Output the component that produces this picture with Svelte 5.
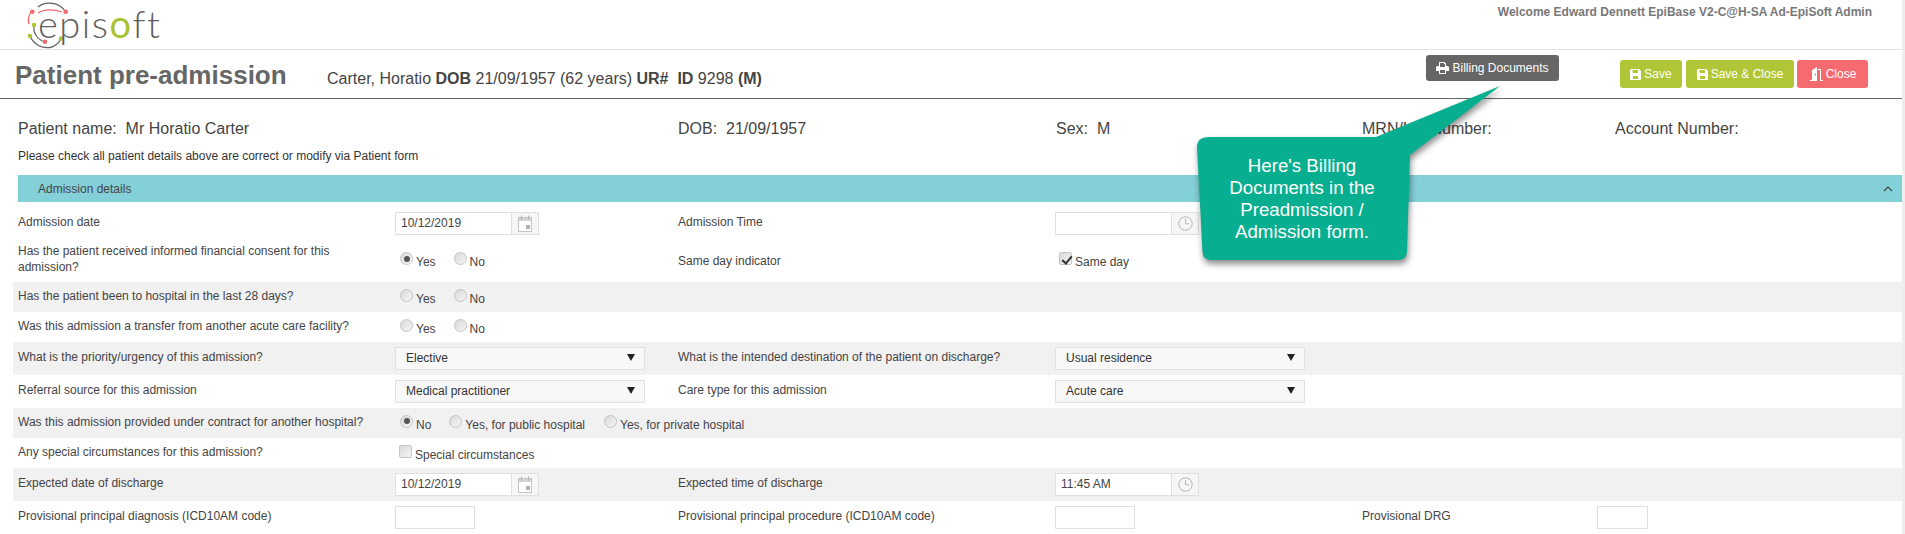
<script>
  const yesNo = (name, checked) => [
    { label: 'Yes', name, checked: checked === 'Yes' },
    { label: 'No', name, checked: checked === 'No' }
  ];
</script>

{#snippet calendar()}
  <span class="addon">
    <svg width="14" height="17" viewBox="0 0 14 17" fill="none">
      <rect x="0.5" y="2.5" width="13" height="14" fill="#fff" stroke="#c4c4c4"/>
      <rect x="1" y="3" width="12" height="3" fill="#d4d4d4"/>
      <path d="M3.5 0.5v4M10.5 0.5v4" stroke="#b5b5b5"/>
      <rect x="8" y="10" width="4" height="4" fill="#b0b0b0"/>
    </svg>
  </span>
{/snippet}

{#snippet clock()}
  <span class="addon">
    <svg width="15" height="15" viewBox="0 0 15 15" fill="none" stroke="#b5b5b5">
      <circle cx="7.5" cy="7.5" r="6.7"/>
      <path d="M7.5 3v4.8h3.6"/>
    </svg>
  </span>
{/snippet}

{#snippet radios(items)}
  <div class="choices">
    {#each items as item}
      <label class="choice">
        <input type="radio" name={item.name} checked={item.checked} />
        <span>{item.label}</span>
      </label>
    {/each}
  </div>
{/snippet}

{#snippet dropdown(value)}
  <div class="select">
    <select><option>{value}</option></select>
    <svg class="arrow" width="8" height="7" viewBox="0 0 8 7"><path d="M0 0h8L4 7z" fill="#222"/></svg>
  </div>
{/snippet}

<div class="page">
  <header class="top">
    <div class="logo">
      <svg class="marks" width="90" height="50" viewBox="0 0 90 50" fill="none">
        <path d="M38 7C44 2 54 2 60 6C62 7.500 64 9 65 11" stroke="#666" stroke-width="1.400"/>
        <path d="M29 24C27.500 19 29 14 32 11.500" stroke="#f4696d" stroke-width="1.400"/>
        <path d="M38 13C44 9 54 9 62 12" stroke="#f4696d" stroke-width="1.200"/>
        <path d="M30 36C34 45 42 48.500 50 47.500C54 47 58 44 61 39" stroke="#666" stroke-width="1.400"/>
        <path d="M34 27C33 33 38 40 45 42" stroke="#666" stroke-width="1.200"/>
        <circle cx="32.300" cy="11.700" r="2.300" fill="#f4696d"/>
        <circle cx="65.700" cy="11.700" r="2.300" fill="#f4696d"/>
        <circle cx="34" cy="25" r="2.300" fill="#b0c636"/>
        <circle cx="30" cy="36" r="2.300" fill="#b0c636"/>
        <circle cx="45" cy="41.700" r="2.300" fill="#f4696d"/>
        <circle cx="61" cy="38.500" r="2.300" fill="#b0c636"/>
      </svg>
      <span class="wordmark">epis<span class="green">o</span>ft</span>
    </div>
    <div class="welcome">Welcome Edward Dennett EpiBase V2-C@H-SA Ad-EpiSoft Admin</div>
  </header>

  <div class="titlebar">
    <h1>Patient pre-admission</h1>
    <div class="subject">Carter, Horatio <b>DOB</b> 21/09/1957 (62 years) <b>UR#</b>&nbsp; <b>ID</b> 9298 <b>(M)</b></div>
    <button class="btn billing">
      <svg width="13" height="12" viewBox="0 0 13 12"><path fill="#fff" fill-rule="evenodd" d="M3 0h5.500L10 1.500V4h1.500A1.500 1.500 0 0 1 13 5.500V9h-3v3H3V9H0V5.500A1.500 1.500 0 0 1 1.500 4H3zM4 1v4h5V2H8V1zM4 8v3h5V8z"/></svg>
      Billing Documents
    </button>
    <div class="actions">
      <button class="btn save">
        <svg width="11" height="11" viewBox="0 0 11 11"><path fill="#fff" fill-rule="evenodd" d="M1 0h8l2 2v8a1 1 0 0 1-1 1H1a1 1 0 0 1-1-1V1a1 1 0 0 1 1-1zM2.500 1v3h5.500V1zM3 7v3h5V7z"/></svg>
        Save
      </button>
      <button class="btn save">
        <svg width="11" height="11" viewBox="0 0 11 11"><path fill="#fff" fill-rule="evenodd" d="M1 0h8l2 2v8a1 1 0 0 1-1 1H1a1 1 0 0 1-1-1V1a1 1 0 0 1 1-1zM2.500 1v3h5.500V1zM3 7v3h5V7z"/></svg>
        Save &amp; Close
      </button>
      <button class="btn close">
        <svg width="14" height="14" viewBox="0 0 14 14"><path fill="#fff" fill-rule="evenodd" d="M3 13V3l5-3v14H1v-1zM6 6.500v2h1v-2zM9 2h3v11h2v1h-3V3H9z"/></svg>
        Close
      </button>
    </div>
  </div>

  <div class="patient">
    <span>Patient name:&nbsp; Mr Horatio Carter</span>
    <span>DOB:&nbsp; 21/09/1957</span>
    <span>Sex:&nbsp; M</span>
    <span>MRN/UR Number:</span>
    <span>Account Number:</span>
  </div>
  <p class="note">Please check all patient details above are correct or modify via Patient form</p>

  <div class="band">
    <span>Admission details</span>
    <svg width="10" height="6" viewBox="0 0 10 6" fill="none"><path d="M1 5l4-4 4 4" stroke="#444" stroke-width="1.200"/></svg>
  </div>

  <div class="form">
    <div class="row first">
      <div class="lab">Admission date</div>
      <div class="ctl"><div class="group"><input value="10/12/2019" />{@render calendar()}</div></div>
      <div class="lab2">Admission Time</div>
      <div class="ctl"><div class="group"><input value="" />{@render clock()}</div></div>
    </div>
    <div class="row second">
      <div class="lab">Has the patient received informed financial consent for this admission?</div>
      <div class="ctl">{@render radios(yesNo('consent', 'Yes'))}</div>
      <div class="lab2 low">Same day indicator</div>
      <div class="ctl">
        <label class="choice check"><input type="checkbox" checked /><span>Same day</span></label>
      </div>
    </div>
    <div class="row h30 grey">
      <div class="lab">Has the patient been to hospital in the last 28 days?</div>
      <div class="ctl">{@render radios(yesNo('recent', ''))}</div>
    </div>
    <div class="row h30">
      <div class="lab">Was this admission a transfer from another acute care facility?</div>
      <div class="ctl">{@render radios(yesNo('transfer', ''))}</div>
    </div>
    <div class="row h33 grey">
      <div class="lab">What is the priority/urgency of this admission?</div>
      <div class="ctl">{@render dropdown('Elective')}</div>
      <div class="lab2">What is the intended destination of the patient on discharge?</div>
      <div class="ctl">{@render dropdown('Usual residence')}</div>
    </div>
    <div class="row h33">
      <div class="lab">Referral source for this admission</div>
      <div class="ctl">{@render dropdown('Medical practitioner')}</div>
      <div class="lab2">Care type for this admission</div>
      <div class="ctl">{@render dropdown('Acute care')}</div>
    </div>
    <div class="row h30 grey">
      <div class="lab">Was this admission provided under contract for another hospital?</div>
      <div class="ctl wide">
        <div class="choices tight">
          <label class="choice"><input type="radio" name="contract" checked /><span>No</span></label>
          <label class="choice"><input type="radio" name="contract" /><span>Yes, for public hospital</span></label>
          <label class="choice"><input type="radio" name="contract" /><span>Yes, for private hospital</span></label>
        </div>
      </div>
    </div>
    <div class="row h30">
      <div class="lab">Any special circumstances for this admission?</div>
      <div class="ctl wide">
        <label class="choice check"><input type="checkbox" /><span>Special circumstances</span></label>
      </div>
    </div>
    <div class="row h33 grey">
      <div class="lab">Expected date of discharge</div>
      <div class="ctl"><div class="group"><input value="10/12/2019" />{@render calendar()}</div></div>
      <div class="lab2">Expected time of discharge</div>
      <div class="ctl"><div class="group"><input value="11:45 AM" />{@render clock()}</div></div>
    </div>
    <div class="row h33">
      <div class="lab">Provisional principal diagnosis (ICD10AM code)</div>
      <div class="ctl"><input class="plain" value="" /></div>
      <div class="lab2">Provisional principal procedure (ICD10AM code)</div>
      <div class="ctl"><input class="plain" value="" /></div>
      <div class="lab3">Provisional DRG</div>
      <div class="ctl"><input class="plain drg" value="" /></div>
    </div>
  </div>

  <div class="callout">
    <svg class="bubble" width="330" height="190" viewBox="0 0 330 190">
      <path d="M12 51H179L303 0L213 69L210 166Q209.500 174 201 174H14Q6 174 5.500 166L0 61Q0 51 12 51Z" fill="#07ae8f"/>
    </svg>
    <div class="tip">Here's Billing Documents in the Preadmission / Admission form.</div>
  </div>
</div>

<style>
  :global(body) {
    margin: 0;
    background: #fff;
    overflow: hidden;
  }
  * {
    box-sizing: border-box;
  }
  .page {
    position: relative;
    width: 1905px;
    height: 534px;
    overflow: hidden;
    border-right: 3px solid #eee;
    font-family: "Liberation Sans", Arial, sans-serif;
    font-size: 12px;
    color: #333;
  }
  .top {
    height: 50px;
    border-bottom: 1px solid #e4e4e4;
    display: flex;
    justify-content: space-between;
  }
  .logo {
    position: relative;
    width: 200px;
    height: 49px;
  }
  .marks {
    position: absolute;
    left: 0;
    top: 0;
  }
  .wordmark {
    position: absolute;
    left: 38px;
    top: 0;
    font-family: Lato, sans-serif;
    font-weight: 300;
    font-size: 38px;
    line-height: 46px;
    color: #5f5f5f;
    letter-spacing: 1.500px;
  }
  .green {
    color: #a9c22f;
    font-weight: 400;
  }
  .welcome {
    margin: 5px 30px 0 0;
    font-size: 12px;
    font-weight: 700;
    line-height: 14px;
    color: #777;
  }
  .titlebar {
    height: 49px;
    border-bottom: 1px solid #666;
    display: flex;
    align-items: flex-start;
    padding-left: 15px;
  }
  h1 {
    margin: 10px 0 0;
    width: 312px;
    font-size: 26px;
    line-height: 30px;
    font-weight: 700;
    color: #666;
  }
  .subject {
    margin-top: 19px;
    width: 1099px;
    font-size: 16px;
    line-height: 20px;
    color: #444;
  }
  .btn {
    border: 0;
    border-radius: 3px;
    color: #fff;
    font: 12px "Liberation Sans", Arial, sans-serif;
    display: flex;
    align-items: center;
    justify-content: center;
    gap: 3px;
    padding: 0;
  }
  .billing {
    margin-top: 5px;
    width: 133px;
    height: 26px;
    background: #666;
  }
  .actions {
    margin: 10px 0 0 61px;
    display: flex;
    gap: 4px;
  }
  .actions .btn {
    height: 28px;
  }
  .save {
    width: 62px;
    background: #b0c636;
  }
  .save + .save {
    width: 108px;
  }
  .close {
    width: 71px;
    margin-left: -1px;
    background: #f56b6f;
  }
  .patient {
    height: 50px;
    padding-top: 20px;
    display: grid;
    grid-template-columns: 660px 378px 306px 253px 1fr;
    padding-left: 18px;
    font-size: 16px;
    line-height: 19px;
    color: #444;
  }
  .note {
    margin: 0;
    height: 26px;
    padding-left: 18px;
    line-height: 15px;
    color: #333;
  }
  .band {
    margin-left: 18px;
    height: 27px;
    background: #84d0d8;
    display: flex;
    align-items: center;
    justify-content: space-between;
    padding: 0 9px 0 20px;
    color: #444;
  }
  .row {
    margin-left: 13px;
    display: grid;
    grid-template-columns: 382px 283px 377px 307px 235px 1fr;
    align-items: center;
    line-height: 16px;
    color: #444;
  }
  .grey {
    background: #f1f1f1;
  }
  .first {
    height: 37px;
    padding-top: 6px;
  }
  .second {
    height: 43px;
  }
  .h30 {
    height: 30px;
  }
  .h33 {
    height: 33px;
  }
  .lab {
    padding: 0 5px 3px;
  }
  .lab2,
  .lab3 {
    padding: 0 5px 3px 0;
  }
  .lab2.low {
    padding-bottom: 0;
  }
  .ctl {
    min-width: 0;
  }
  .wide {
    grid-column: span 2;
  }
  .group {
    display: flex;
    width: 144px;
    height: 23px;
    border: 1px solid #e0e0e0;
  }
  input:not([type]) {
    font: 12px "Liberation Sans", Arial, sans-serif;
    color: #444;
    background: #fff;
    outline: none;
  }
  .group input {
    width: 116px;
    border: 0;
    border-right: 1px solid #e0e0e0;
    padding: 0 0 2px 5px;
  }
  .addon {
    flex: 1;
    display: flex;
    align-items: center;
    justify-content: center;
    background: #f6f6f6;
  }
  .plain {
    display: block;
    width: 80px;
    height: 23px;
    border: 1px solid #e0e0e0;
    padding: 0 5px;
  }
  .drg {
    width: 51px;
  }
  .choices {
    display: flex;
    gap: 18px;
    padding-left: 5px;
  }
  .tight .choice + .choice + .choice {
    margin-left: 1px;
  }
  .choice {
    display: inline-flex;
    align-items: flex-start;
    gap: 3px;
    line-height: 14px;
    color: #444;
  }
  .choice span {
    padding-top: 3px;
  }
  .choice input {
    appearance: none;
    margin: 0;
    width: 13px;
    height: 13px;
    flex: none;
    border: 1px solid #c4c4c4;
    background: linear-gradient(135deg, #d8d8d8, #f6f6f6);
    position: relative;
  }
  input[type="radio"] {
    border-radius: 50%;
  }
  input[type="radio"]:checked::after {
    content: "";
    position: absolute;
    left: 2.500px;
    top: 2.500px;
    width: 6px;
    height: 6px;
    border-radius: 50%;
    background: #555;
  }
  .check {
    margin-left: 4px;
  }
  input[type="checkbox"] {
    border-radius: 2px;
  }
  input[type="checkbox"]:checked::after {
    content: "";
    position: absolute;
    left: 3.500px;
    top: 0.500px;
    width: 4px;
    height: 8px;
    border: solid #333;
    border-width: 0 2px 2px 0;
    transform: rotate(40deg);
  }
  .select {
    position: relative;
    width: 250px;
    height: 23px;
  }
  select {
    appearance: none;
    width: 100%;
    height: 100%;
    border: 1px solid #e0e0e0;
    background: #f8f8f8;
    padding: 0 0 2px 10px;
    font: 12px "Liberation Sans", Arial, sans-serif;
    color: #333;
    outline: none;
  }
  .arrow {
    position: absolute;
    right: 10px;
    top: 7px;
    pointer-events: none;
  }
  .callout {
    position: absolute;
    left: 1197px;
    top: 86px;
    width: 330px;
    height: 190px;
  }
  .bubble {
    position: absolute;
    left: 0;
    top: 0;
    filter: drop-shadow(1px 4px 3px rgba(0, 0, 0, 0.45));
  }
  .tip {
    position: absolute;
    left: 15px;
    top: 69px;
    width: 180px;
    text-align: center;
    color: #fff;
    font-size: 18.700px;
    line-height: 22px;
  }
</style>
